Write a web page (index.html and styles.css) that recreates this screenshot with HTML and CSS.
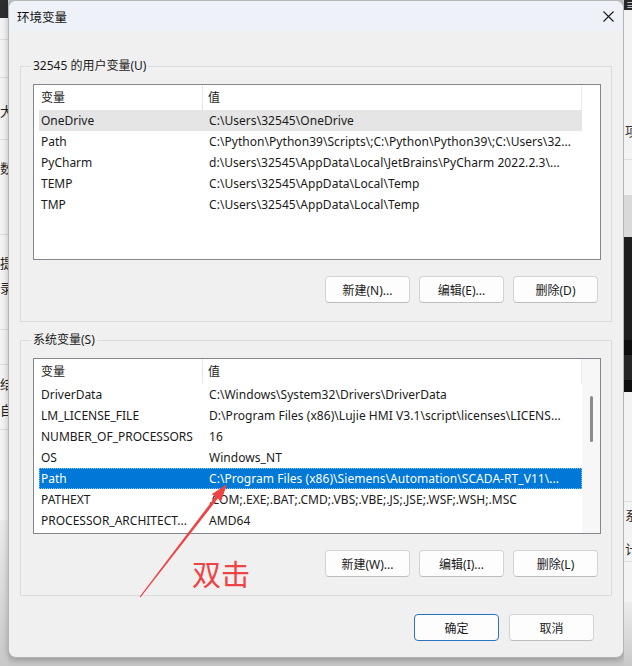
FILE: index.html
```html
<!DOCTYPE html>
<html lang="zh-CN">
<head>
<meta charset="utf-8">
<title>环境变量</title>
<link rel="stylesheet" href="styles.css">
</head>
<body>
<div class="screen">
  <div class="side side-left">
    <div class="blk dark" style="height:18px"></div>
    <div class="blk light line" style="height:22px"></div>
    <div class="blk light line" style="height:38px"></div>
    <div class="blk light line" style="height:62px"><span class="frag" style="padding-top:25px">大</span></div>
    <div class="blk light line" style="height:95px"><span class="frag" style="padding-top:20px">数</span></div>
    <div class="blk light line" style="height:95px"><span class="frag" style="padding-top:20px">提</span><span class="frag" style="padding-top:9px">录</span></div>
    <div class="blk light line" style="height:35px"></div>
    <div class="blk light line" style="height:65px"><span class="frag" style="padding-top:11px">结</span><span class="frag" style="padding-top:10px">自</span></div>
    <div class="blk light" style="height:90px"></div>
    <div class="blk grad" style="height:146px"></div>
  </div>

  <div class="dialog">
    <div class="titlebar">
      <span class="title">环境变量</span>
      <svg class="close" width="11" height="11" viewBox="0 0 11 11"><path d="M0.5 0.5 L10.5 10.5 M10.5 0.5 L0.5 10.5" stroke="#1b1b1b" stroke-width="1.1" fill="none"/></svg>
    </div>
    <div class="body">
      <fieldset class="group">
        <legend>32545 的用户变量(U)</legend>
        <div class="listbox">
          <div class="list-main">
            <div class="row header"><span class="c1">变量</span><span class="c2">值</span></div>
            <div class="row sel-grey"><span class="c1">OneDrive</span><span class="c2">C:\Users\32545\OneDrive</span></div>
            <div class="row"><span class="c1">Path</span><span class="c2">C:\Python\Python39\Scripts\;C:\Python\Python39\;C:\Users\32...</span></div>
            <div class="row"><span class="c1">PyCharm</span><span class="c2">d:\Users\32545\AppData\Local\JetBrains\PyCharm 2022.2.3\...</span></div>
            <div class="row"><span class="c1">TEMP</span><span class="c2">C:\Users\32545\AppData\Local\Temp</span></div>
            <div class="row"><span class="c1">TMP</span><span class="c2">C:\Users\32545\AppData\Local\Temp</span></div>
          </div>
          <div class="vscroll plain"></div>
        </div>
        <div class="btnrow">
          <button class="btn">新建(N)...</button>
          <button class="btn">编辑(E)...</button>
          <button class="btn">删除(D)</button>
        </div>
      </fieldset>

      <fieldset class="group group2">
        <legend>系统变量(S)</legend>
        <div class="listbox">
          <div class="list-main">
            <div class="row header"><span class="c1">变量</span><span class="c2">值</span></div>
            <div class="row"><span class="c1">DriverData</span><span class="c2">C:\Windows\System32\Drivers\DriverData</span></div>
            <div class="row"><span class="c1">LM_LICENSE_FILE</span><span class="c2">D:\Program Files (x86)\Lujie HMI V3.1\script\licenses\LICENS...</span></div>
            <div class="row"><span class="c1">NUMBER_OF_PROCESSORS</span><span class="c2">16</span></div>
            <div class="row"><span class="c1">OS</span><span class="c2">Windows_NT</span></div>
            <div class="row sel-blue"><span class="c1">Path</span><span class="c2">C:\Program Files (x86)\Siemens\Automation\SCADA-RT_V11\...</span></div>
            <div class="row"><span class="c1">PATHEXT</span><span class="c2">.COM;.EXE;.BAT;.CMD;.VBS;.VBE;.JS;.JSE;.WSF;.WSH;.MSC</span></div>
            <div class="row"><span class="c1">PROCESSOR_ARCHITECT...</span><span class="c2">AMD64</span></div>
          </div>
          <div class="vscroll track"><div class="thumb"></div></div>
        </div>
        <div class="btnrow">
          <button class="btn">新建(W)...</button>
          <button class="btn">编辑(I)...</button>
          <button class="btn">删除(L)</button>
        </div>
      </fieldset>

      <div class="okrow">
        <button class="btn primary">确定</button>
        <button class="btn">取消</button>
      </div>
    </div>
  </div>

  <div class="side side-right">
    <div class="blk dark2" style="height:10px"><span class="menu">≡</span></div>
    <div class="blk light line" style="height:150px"><span class="frag fr" style="padding-top:113px">项</span></div>
    <div class="blk light" style="height:35px"></div>
    <div class="blk mid" style="height:42px"></div>
    <div class="blk black1" style="height:103px"></div>
    <div class="blk black2" style="height:15px"></div>
    <div class="blk black3" style="height:25px"></div>
    <div class="blk black2" style="height:12px"></div>
    <div class="blk light line" style="height:110px"></div>
    <div class="blk light line" style="height:60px"><span class="frag fr" style="padding-top:5px">系</span><span class="frag fr" style="padding-top:18px">计</span></div>
    <div class="blk light" style="height:40px"></div>
    <div class="blk grad" style="height:64px"></div>
  </div>
</div>

<svg class="annot" width="632" height="666" viewBox="0 0 632 666">
  <polygon points="227,484 221,501.5 217.8,498.6 140.4,597.4 139.6,596.8 215.4,496.6 211.8,494.2" fill="#ee4444"/>
</svg>
<div class="annot-text">双击</div>
</body>
</html>
```

FILE: styles.css
```css
* { box-sizing: border-box; }

html, body {
  margin: 0;
  padding: 0;
}

body {
  width: 632px;
  height: 666px;
  overflow: hidden;
  position: relative;
  background: #c6c6c6;
  font-family: "Noto Sans", "Noto Sans CJK SC", sans-serif;
  font-size: 12px;
  color: #1a1a1a;
}

.screen {
  display: grid;
  grid-template-columns: 8px 616px 8px;
  height: 666px;
}

/* background application strips */
.side {
  display: flex;
  flex-direction: column;
  overflow: hidden;
}
.blk {
  display: flex;
  flex-direction: column;
  flex: none;
  overflow: hidden;
}
.dark { background: #2e2e2e; }
.dark2 { background: #262626; }
.light { background: #f3f3f3; }
.line { border-bottom: 1px solid #dedede; }
.mid { background: #d9d9d9; }
.black1 { background: #1e1e1e; }
.black2 { background: #0f0f0f; }
.black3 { background: #262626; }
.grad { background: linear-gradient(#ececec, #c9c9c9); }
.frag {
  display: block;
  font-family: "Noto Sans CJK SC", sans-serif;
  font-size: 13px;
  line-height: 16px;
  color: #222;
  white-space: nowrap;
}
.frag.fr { margin-left: 1px; color: #333; }
.menu {
  color: #ddd;
  font-size: 10px;
  line-height: 10px;
  margin-left: 2px;
}

/* dialog */
.dialog {
  height: 658px;
  background: #f0f0f0;
  border: 1px solid #b4b4b4;
  border-radius: 8px;
  overflow: hidden;
  display: flex;
  flex-direction: column;
  box-shadow: 0 2px 6px rgba(0,0,0,0.25);
}

.titlebar {
  height: 30px;
  flex: none;
  background: #eef2f8;
  display: flex;
  align-items: center;
  justify-content: space-between;
  padding: 0 9px 0 8px;
}
.title {
  font-family: "Noto Sans CJK SC", sans-serif;
  font-size: 12.5px;
  color: #111;
}
.close { display: block; margin-top: 0; }

.body {
  display: flex;
  flex-direction: column;
  padding: 27px 11px 0 11px;
}

.group {
  margin: 0;
  border: 1px solid #dcdcdc;
  padding: 10px 10px 18px 12px;
  min-width: 0;
}
.group2 { margin-top: 10px; }

.group legend {
  padding: 0 2px;
  margin-left: -2px;
  line-height: 16px;
  font-size: 12px;
  color: #1a1a1a;
}

.listbox {
  height: 176px;
  border: 1px solid #828790;
  background: #fff;
  display: flex;
}
.list-main {
  flex: 1;
  padding-left: 5px;
  min-width: 0;
}
.vscroll {
  width: 18px;
  flex: none;
}
.vscroll.track {
  background: #f7f7f7;
  padding: 37px 0 0 8px;
}
.thumb {
  width: 3px;
  height: 46px;
  border-radius: 2px;
  background: #8a8a8a;
}

.row {
  display: grid;
  grid-template-columns: 164px 1fr;
  height: 21px;
  line-height: 21px;
  white-space: nowrap;
}
.row .c1, .row .c2 {
  overflow: hidden;
  white-space: nowrap;
}
.row .c1 { padding-left: 2px; }
.row .c2 { padding-left: 6px; letter-spacing: 0.05px; }

.row.header {
  height: 25px;
  line-height: 25px;
  border-right: 1px solid #ececec;
}
.row.header .c1 { border-right: 1px solid #e5e5e5; }
.row.header .c2 { padding-left: 5px; }

.sel-grey { background: #e5e5e5; }
.sel-blue {
  background: #0078d7;
  color: #fff;
  outline: 1px dotted #8cc4ef;
  outline-offset: -1px;
}

.btnrow {
  display: flex;
  justify-content: flex-end;
  gap: 9px;
  margin-top: 16px;
  padding-right: 3px;
}

.btn {
  width: 85px;
  height: 27px;
  background: #fdfdfd;
  border: 1px solid #d3d3d3;
  border-bottom-color: #bdbdbd;
  border-radius: 4px;
  font-family: "Noto Sans", "Noto Sans CJK SC", sans-serif;
  font-size: 12px;
  color: #1a1a1a;
  padding: 0;
}
.btn.primary {
  border: 1px solid #2a73be;
}

.okrow {
  display: flex;
  justify-content: flex-end;
  gap: 10px;
  margin-top: 18px;
  padding-right: 18px;
}

/* annotation overlay */
.annot {
  position: absolute;
  left: 0;
  top: 0;
  pointer-events: none;
}
.annot-text {
  position: absolute;
  left: 192px;
  top: 559px;
  font-family: "Noto Sans CJK SC", sans-serif;
  font-size: 29px;
  line-height: 29px;
  color: #ee4444;
}
```
